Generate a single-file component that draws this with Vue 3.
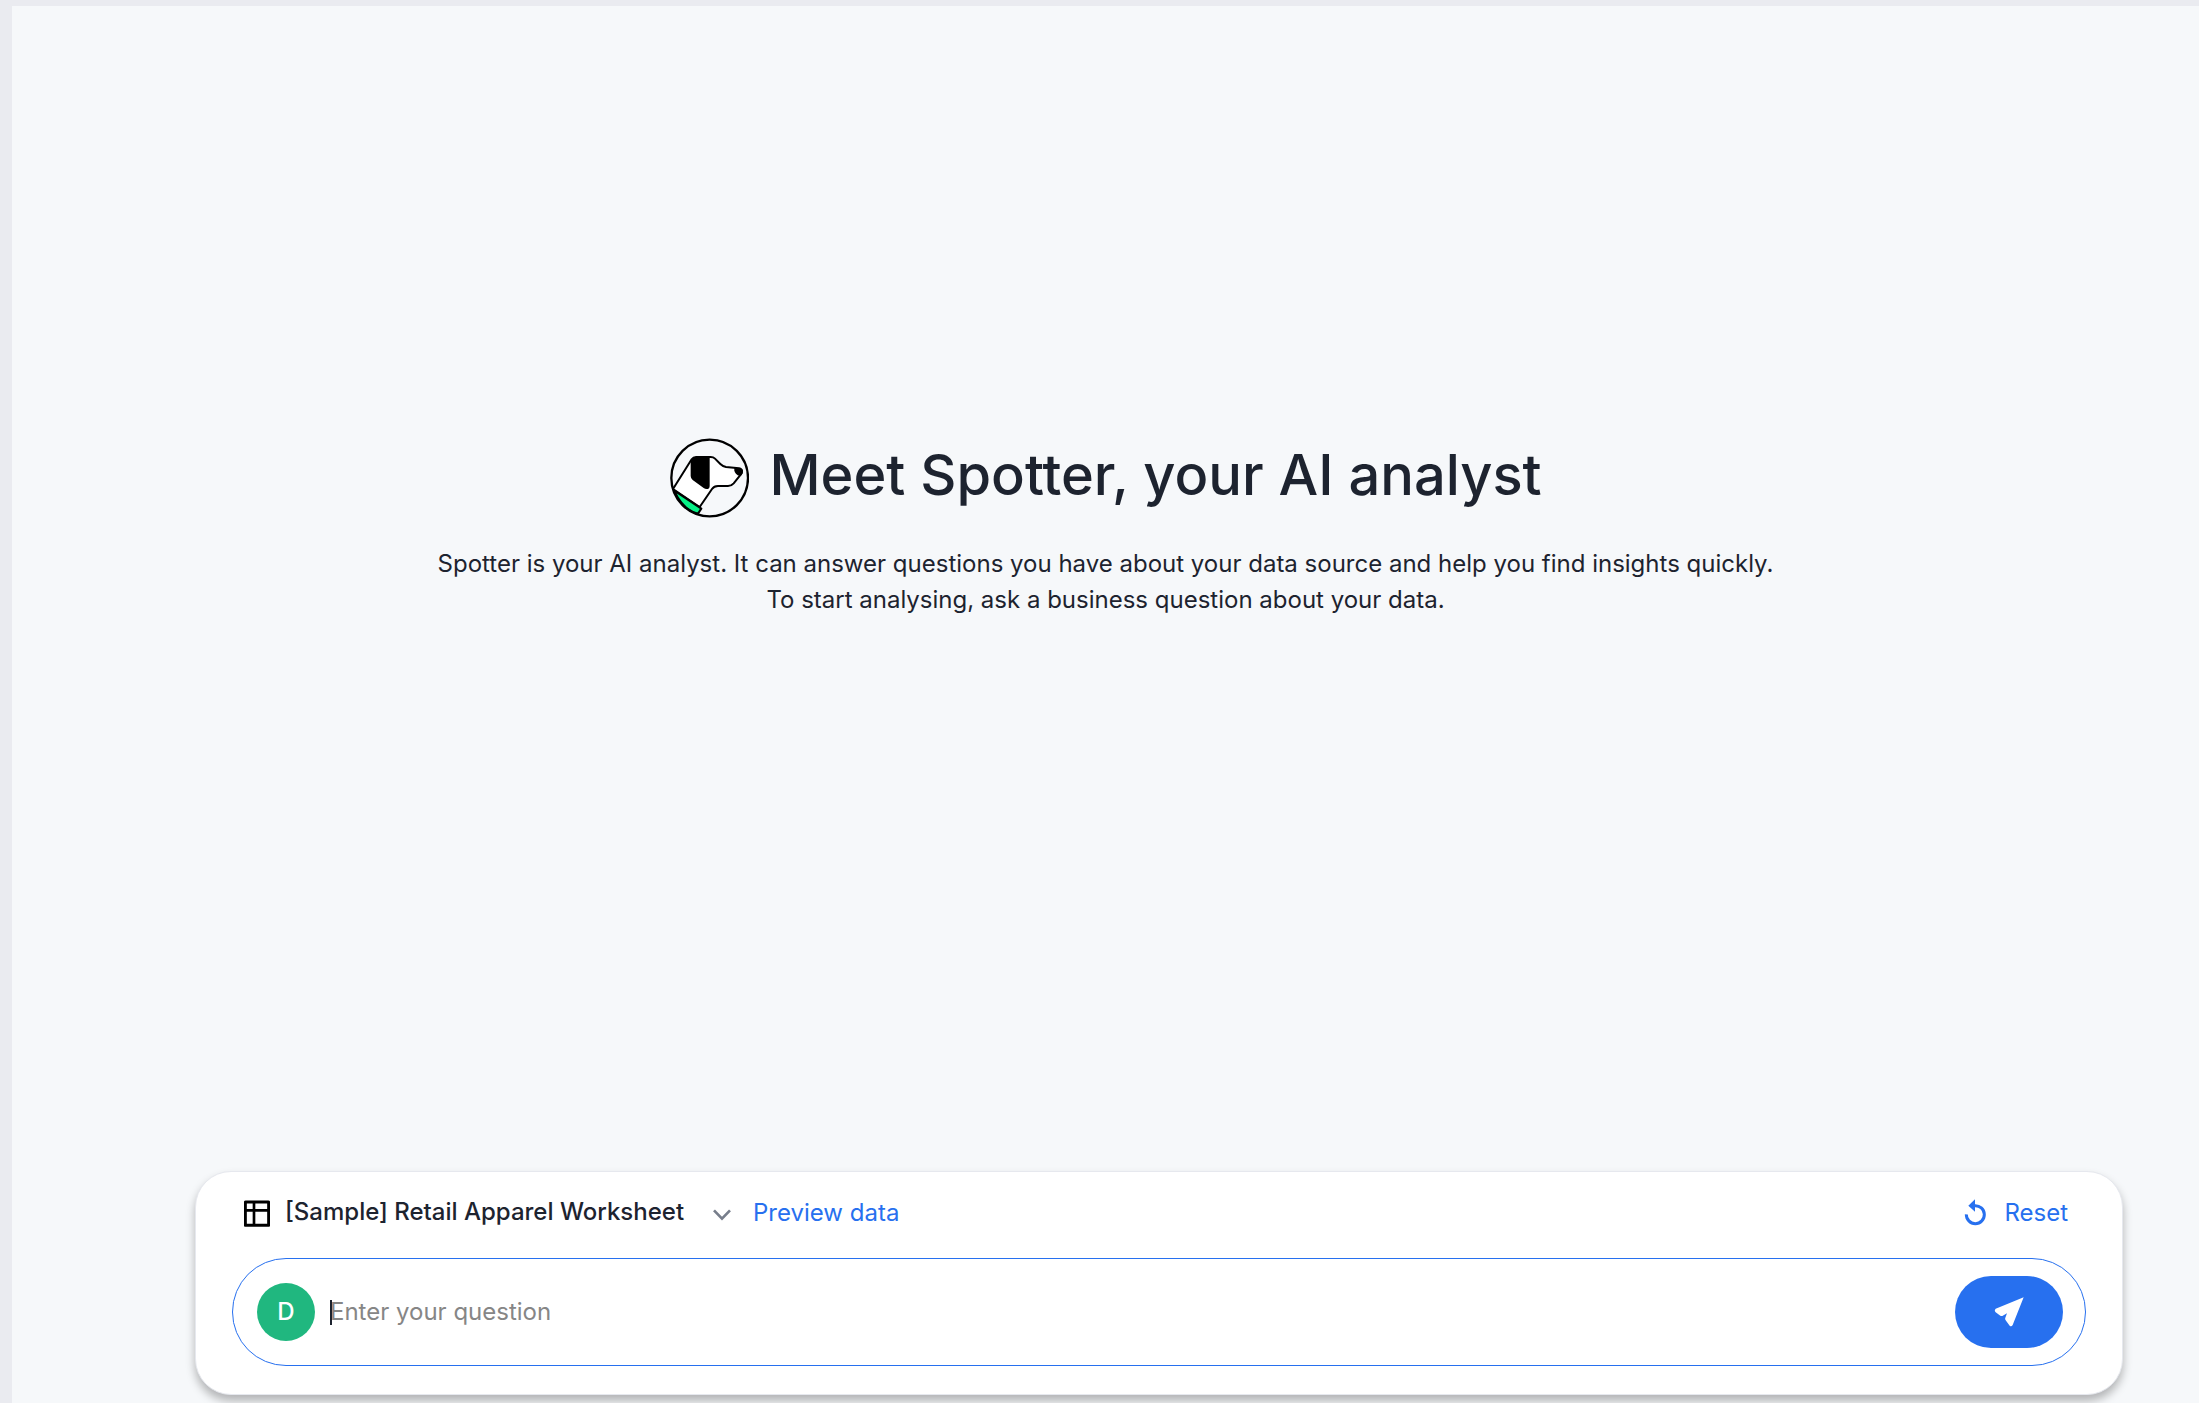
<template>
  <div class="page">
    <main class="panel">
      <section class="hero">
        <div class="hero-heading">
          <svg class="hero-logo" viewBox="35 27 240 240" aria-hidden="true">
            <circle cx="157" cy="147" r="115" fill="#f6f8fa" />
            <path
              d="M47 180 L103 91 Q108 84 116 84 H160 Q168 84 173 89 L189 105 Q196 112 206 114 L245 118 Q254 120 254 127 Q254 132 250 137 L229 163 Q222 171 212 171 H182 Q170 171 164 180 L127 234 Z"
              fill="#fff"
              stroke="#000"
              stroke-width="6"
              stroke-linejoin="round"
            />
            <path d="M50 184 L132 239 L122 254 Q78 244 50 184 Z" fill="#06f086" stroke="#000" stroke-width="6" stroke-linejoin="round" />
            <path d="M103 91 Q108 84 116 84 H157 V170 Q157 180 148 180 Q143 180 139 177 L106 153 Q100 148 100 141 V98 Z" />
            <path d="M231 117 L248 118 Q257 120 257 128 Q257 133 252 139 L247 141 Q234 136 231 125 Z" />
            <circle cx="157" cy="147" r="115" fill="none" stroke="#000" stroke-width="7" />
          </svg>
          <h1 class="hero-title">Meet Spotter, your AI analyst</h1>
        </div>
        <p class="hero-text">
          Spotter is your AI analyst. It can answer questions you have about your data source and help you find insights quickly.<br />
          To start analysing, ask a business question about your data.
        </p>
      </section>

      <form class="composer" @submit.prevent="send">
        <div class="composer-header">
          <label class="source-icon" for="source" aria-label="Data source">
            <svg width="26" height="29" viewBox="190 119 78 87" fill="none" stroke="#000">
              <rect x="194" y="131" width="70" height="70" rx="1" stroke-width="9" />
              <path d="M194 156 H264 M220 131 V201" stroke-width="8" />
            </svg>
          </label>
          <div class="source">
            <select id="source" v-model="source" class="source-select">
              <option v-for="item in sources" :key="item" :value="item">{{ item }}</option>
            </select>
            <svg class="source-arrow" width="18" height="18" viewBox="454 133 54 54" fill="none" stroke="#777e8b" stroke-width="8">
              <path d="M457 155 L481 180 L505 155" />
            </svg>
          </div>
          <a href="#" class="link">Preview data</a>
          <button type="button" class="reset" @click="reset">
            <svg width="22" height="27" viewBox="190 122 66 81" fill="#2770ef">
              <path d="M197 168 A27 27 0 1 0 222 142" fill="none" stroke="#2770ef" stroke-width="9" />
              <path d="M223 123 V160 L203 142 Z" />
            </svg>
            Reset
          </button>
        </div>

        <div class="field">
          <span class="avatar">D</span>
          <div class="question">
            <span class="caret"></span>
            <input v-model="question" class="question-input" type="text" placeholder="Enter your question" aria-label="Question" />
          </div>
          <button type="submit" class="send" aria-label="Send">
            <svg width="32" height="32" viewBox="279 409 96 96" fill="#fff">
              <path
                d="M371 413 L338 496 Q334 503 329 498 L317 482 Q314 478 316 474 L321 461 L307 469 Q304 470 301 468 L286 457 Q282 451 287 447 Z"
              />
            </svg>
          </button>
        </div>
      </form>
    </main>
  </div>
</template>

<script setup>
import { ref } from "vue";

const sources = ["[Sample] Retail Apparel Worksheet"];
const source = ref(sources[0]);
const question = ref("");

const reset = () => {
  question.value = "";
};

const send = () => {
  if (question.value.trim()) {
    reset();
  }
};
</script>

<style>
body {
  margin: 0;
}
</style>

<style scoped>
.page {
  box-sizing: border-box;
  display: flex;
  min-height: 100vh;
  padding: 6px 0 0 12px;
  background-color: #eaebf0;
  color: #1d232f;
  font-family: Inter, "Liberation Sans", sans-serif;
  font-size: 24px;
}

.panel {
  display: flex;
  flex-direction: column;
  flex-grow: 1;
  background-color: #f6f8fa;
}

.hero {
  display: flex;
  flex-direction: column;
  flex-grow: 1;
  align-items: center;
  justify-content: center;
  gap: 28px;
  padding-bottom: 122px;
}

.hero-heading {
  display: flex;
  align-items: flex-start;
  gap: 20px;
}

.hero-logo {
  width: 80px;
  height: 80px;
}

.hero-title {
  margin: 0;
  font-size: 56px;
  font-weight: 500;
  line-height: 74px;
}

.hero-text {
  margin: 0;
  line-height: 36px;
  text-align: center;
}

.composer {
  margin: 0 76px 8px 183px;
  padding: 22px 36px 28px;
  border: 1px solid #e6e8ee;
  border-radius: 36px;
  background-color: #fff;
  box-shadow: 0 6px 10px rgba(0, 0, 0, 0.28);
}

.composer-header {
  display: flex;
  align-items: center;
  height: 36px;
  margin-bottom: 28px;
  padding: 0 18px 0 12px;
}

.source-icon {
  display: flex;
  margin-right: 15px;
}

.source {
  position: relative;
  display: flex;
  align-items: center;
  margin-right: 22px;
}

.source-select {
  appearance: none;
  padding: 0 46px 0 0;
  border: none;
  background: none;
  color: inherit;
  font: inherit;
  font-weight: 500;
  line-height: 36px;
}

.source-arrow {
  position: absolute;
  right: 0;
  pointer-events: none;
}

.link {
  color: #2770ef;
  text-decoration: none;
}

.reset {
  display: flex;
  align-items: center;
  gap: 18px;
  margin-left: auto;
  padding: 0;
  border: none;
  background: none;
  color: #2770ef;
  font: inherit;
  cursor: pointer;
}

.field {
  box-sizing: border-box;
  display: flex;
  align-items: center;
  height: 108px;
  padding: 0 22px 0 24px;
  border: 1px solid #2770ef;
  border-radius: 54px;
}

.avatar {
  width: 58px;
  margin-right: 15px;
  border-radius: 50%;
  background-color: #20b77f;
  color: #fff;
  font-weight: 500;
  line-height: 58px;
  text-align: center;
}

.question {
  position: relative;
  display: flex;
  flex-grow: 1;
  align-items: center;
}

.caret {
  position: absolute;
  left: 0;
  width: 2px;
  height: 25px;
  background-color: #1d232f;
}

.question-input {
  width: 100%;
  padding: 0;
  border: none;
  outline: none;
  background: none;
  color: inherit;
  font: inherit;
  line-height: 36px;
}

.question-input::placeholder {
  color: #868686;
  opacity: 1;
}

.send {
  display: flex;
  align-items: center;
  justify-content: center;
  width: 108px;
  height: 72px;
  padding: 0;
  border: none;
  border-radius: 36px;
  background-color: #2770ef;
  cursor: pointer;
}
</style>
